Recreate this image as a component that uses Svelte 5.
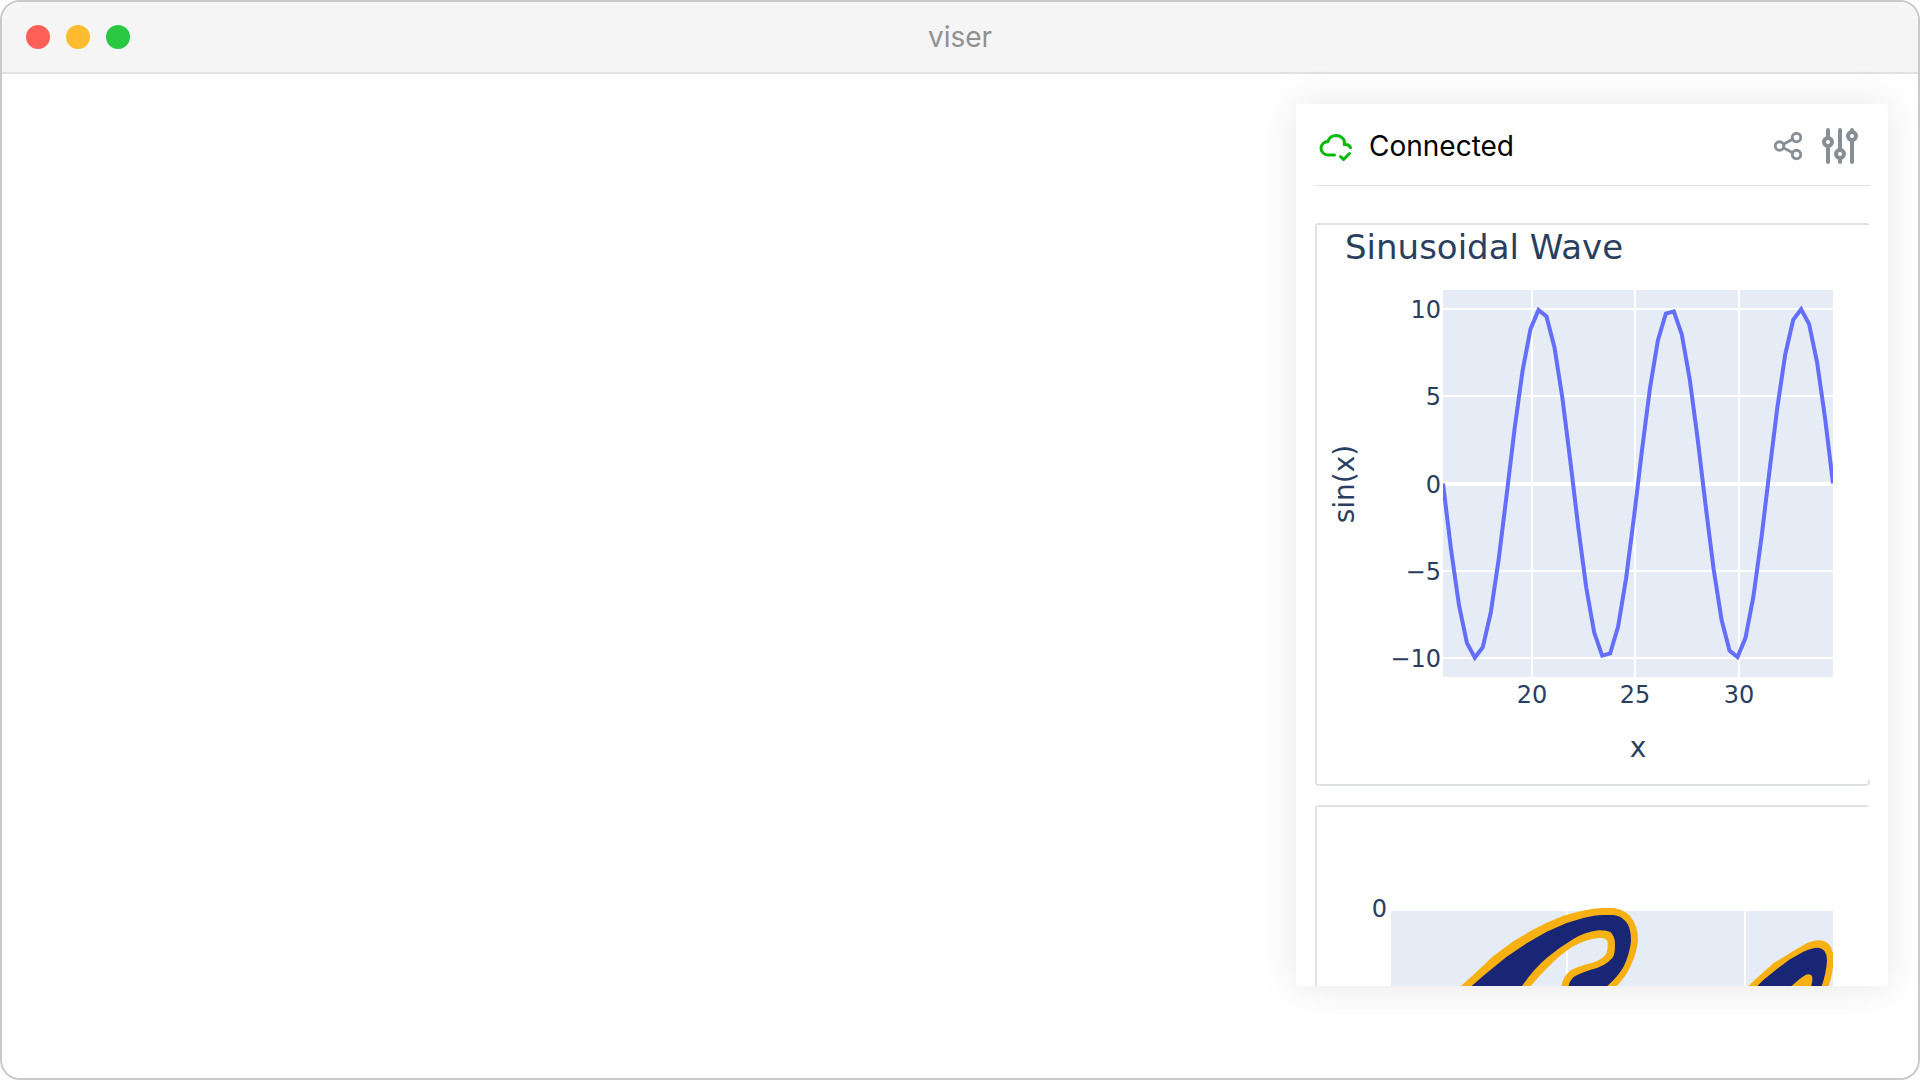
<script>
  const plot = { left: 126, top: 65, width: 390, height: 387 };
  const start = 5 * Math.PI;
  const end = 11 * Math.PI;
  const samples = 50;
  const yMax = 11.1;

  const px = (v) => plot.left + ((v - start) / (end - start)) * plot.width;
  const py = (v) => plot.top + plot.height / 2 - (v / yMax) * (plot.height / 2);

  const wave = Array.from({ length: samples }, (_, i) => {
    const x = start + ((end - start) * i) / (samples - 1);
    return `${px(x).toFixed(2)},${py(10 * Math.sin(x)).toFixed(2)}`;
  }).join(' ');

  const xTicks = [20, 25, 30].map((v) => ({ v, at: Math.round(px(v)) }));
  const yTicks = [10, 5, 0, -5, -10].map((v) => ({
    label: String(v).replace('-', '−'),
    zero: v === 0,
    at: Math.round(py(v)),
  }));
</script>

<div class="window">
  <header class="titlebar">
    <div class="lights">
      <button class="light close" aria-label="Close"></button>
      <button class="light minimize" aria-label="Minimize"></button>
      <button class="light zoom" aria-label="Zoom"></button>
    </div>
    <h1>viser</h1>
  </header>

  <main>
    <aside class="panel">
      <div class="status">
        <svg class="cloud" viewBox="0 0 24 24" aria-hidden="true">
          <path d="M11 18.004h-4.343c-2.572 -.004 -4.657 -2.011 -4.657 -4.487c0 -2.475 2.085 -4.482 4.657 -4.482c.393 -1.762 1.794 -3.2 3.675 -3.773c1.88 -.572 3.956 -.193 5.444 1c1.488 1.19 2.162 3.007 1.77 4.769h.99c1.388 0 2.585 .82 3.138 2.007" />
          <path d="M15 19l2 2l4 -4" />
        </svg>
        <span class="label">Connected</span>
        <button class="icon share" aria-label="Share">
          <svg viewBox="0 0 24 24" aria-hidden="true">
            <circle cx="6" cy="12" r="3" />
            <circle cx="18" cy="6" r="3" />
            <circle cx="18" cy="18" r="3" />
            <path d="M8.7 10.7l6.6 -3.4M8.7 13.3l6.6 3.4" />
          </svg>
        </button>
        <button class="icon settings" aria-label="Configuration">
          <svg viewBox="0 0 24 24" aria-hidden="true">
            <circle cx="6" cy="10" r="2" />
            <circle cx="12" cy="16" r="2" />
            <circle cx="18" cy="7" r="2" />
            <path d="M6 4v4M6 12v8M12 4v10M12 18v2M18 4v1M18 9v11" />
          </svg>
        </button>
      </div>

      <div class="cards">
        <section class="card">
          <svg class="chart" width="553" height="555" viewBox="0 0 553 555" role="img" aria-label="Sinusoidal Wave">
            <defs>
              <clipPath id="wave-clip">
                <rect x={plot.left} y={plot.top} width={plot.width} height={plot.height} />
              </clipPath>
            </defs>
            <rect class="paper" width="553" height="555" />
            <text class="title" x="28" y="34">Sinusoidal Wave</text>
            <rect class="plot" x={plot.left} y={plot.top} width={plot.width} height={plot.height} />
            {#each xTicks as t}
              <path class="grid" d="M{t.at} {plot.top}v{plot.height}" />
              <text class="tick middle" x={t.at} y="478">{t.v}</text>
            {/each}
            {#each yTicks as t}
              <path class="grid" class:zero={t.zero} d="M{plot.left} {t.at}h{plot.width}" />
              <text class="tick end" x="124" y={t.at + 9}>{t.label}</text>
            {/each}
            <polyline class="wave" points={wave} clip-path="url(#wave-clip)" />
            <text class="axis middle" x="321" y="532">x</text>
            <text class="axis middle" transform="translate(37 259) rotate(-90)">sin(x)</text>
          </svg>
        </section>

        <section class="card">
          <svg class="chart" width="553" height="555" viewBox="0 0 553 555" role="img" aria-label="Image plot">
            <defs>
              <clipPath id="image-clip">
                <rect x="74" y="98" width="442" height="400" />
              </clipPath>
            </defs>
            <rect class="paper" width="553" height="555" />
            <rect class="plot" x="74" y="104" width="442" height="394" />
            <path class="grid" d="M250 104v394M428 104v394" />
            <text class="tick end" x="70" y="110">0</text>
            <g clip-path="url(#image-clip)">
              <g transform="translate(-37 73) scale(.33333)">
                <path
                  class="gold"
                  d="M520 340L543 318L582 283L640 228L700 184L750 154L800 128L850 107L900 94Q940 84 975 84H1000Q1030 87 1050 108Q1074 135 1074 180Q1072 215 1052 258Q1036 293 1010 318L990 340H845V318Q846 294 870 272Q890 260 935 249Q965 240 978 222Q984 212 983 185Q978 173 960 173Q920 176 880 199Q845 220 810 256Q780 285 752 318L735 340Z"
                />
                <path
                  class="navy"
                  d="M550 340L575 318L612 286L680 230L740 190L800 155L860 129L910 114Q945 105 970 105H1000Q1022 107 1036 123Q1054 140 1053 185Q1048 225 1030 262Q1012 292 982 318L960 340H866V318Q866 308 880 292Q892 283 930 270Q975 260 997 234Q1005 225 1005 195Q1006 170 992 157Q980 150 955 151Q915 156 880 177Q840 201 800 234Q762 266 726 318L710 340Z"
                />
                <path
                  class="gold"
                  d="M1380 340L1405 318L1438 287L1480 250L1540 213L1580 190Q1605 179 1622 181Q1652 184 1659 220V260Q1657 285 1646 318L1640 340Z"
                />
                <path
                  class="navy"
                  d="M1410 340L1432 318L1450 300L1490 268L1530 238L1570 215Q1600 202 1615 203Q1641 206 1641 240Q1639 280 1625 318L1618 340H1590L1594 318Q1599 300 1596 288Q1590 280 1578 284Q1560 294 1535 318L1515 340Z"
                />
              </g>
            </g>
          </svg>
        </section>
      </div>
    </aside>
  </main>
</div>

<style>
  :global(body) {
    background: #fff;
  }

  .window {
    box-sizing: border-box;
    height: 100vh;
    display: flex;
    flex-direction: column;
    overflow: hidden;
    border: 2px solid #cacaca;
    border-radius: 20px;
    background: #fff;
    font-family: Inter, 'Liberation Sans', sans-serif;
  }

  .titlebar {
    flex: none;
    display: grid;
    grid-template-columns: 1fr auto 1fr;
    align-items: center;
    height: 70px;
    padding: 0 24px;
    border-bottom: 2px solid #e1e1e1;
    background: #f5f5f5;
  }

  .lights {
    display: flex;
    gap: 16px;
  }

  .light {
    width: 24px;
    height: 24px;
    padding: 0;
    border: 0;
    border-radius: 50%;
  }

  .close {
    background: #ff5f57;
  }

  .minimize {
    background: #febc2e;
  }

  .zoom {
    background: #28c840;
  }

  h1 {
    margin: 0;
    color: #919191;
    font-size: 28px;
    font-weight: 400;
    line-height: 36px;
  }

  main {
    flex: 1;
    min-height: 0;
    display: flex;
    justify-content: flex-end;
    padding: 30px 30px 92px;
  }

  .panel {
    box-sizing: border-box;
    width: 592px;
    display: flex;
    flex-direction: column;
    overflow: hidden;
    padding: 0 18px 0 19px;
    border-radius: 4px;
    background: #fff;
    box-shadow: 0 0 40px rgba(0, 0, 0, 0.1);
  }

  .status {
    box-sizing: border-box;
    flex: none;
    display: flex;
    align-items: center;
    height: 82px;
    padding: 2px 6px 0 3px;
    border-bottom: 1px solid #dee2e6;
  }

  svg {
    display: block;
  }

  .status svg {
    fill: none;
    stroke: currentColor;
    stroke-width: 2;
    stroke-linecap: round;
    stroke-linejoin: round;
  }

  .cloud {
    width: 36px;
    height: 36px;
    color: #00bb00;
  }

  .label {
    flex: 1;
    padding-left: 15px;
    color: #000;
    font-size: 28px;
    line-height: 36px;
  }

  .icon {
    padding: 0;
    border: 0;
    background: none;
    color: #868e96;
  }

  .share svg {
    width: 34px;
    height: 34px;
  }

  .settings {
    margin-left: 11px;
  }

  .settings svg {
    width: 48px;
    height: 48px;
  }

  .cards {
    flex: 1;
    min-height: 0;
    display: flex;
    flex-direction: column;
    gap: 19px;
    padding-top: 37px;
  }

  .card {
    flex: none;
    padding-bottom: 4px;
    border: 2px solid #dee2e6;
    border-radius: 4px;
  }

  .chart {
    font-family: Verdana, 'DejaVu Sans', sans-serif;
  }

  .chart text {
    fill: #2a3f5f;
  }

  .paper {
    fill: #fff;
  }

  .plot {
    fill: #e5ecf6;
  }

  .grid {
    stroke: #fff;
    stroke-width: 2;
  }

  .zero {
    stroke-width: 4;
  }

  .wave {
    fill: none;
    stroke: #636efa;
    stroke-width: 4;
    stroke-miterlimit: 2;
  }

  .title {
    font-size: 34px;
  }

  .tick {
    font-size: 24px;
  }

  .axis {
    font-size: 28px;
  }

  .middle {
    text-anchor: middle;
  }

  .end {
    text-anchor: end;
  }

  .gold {
    fill: #f7b113;
  }

  .navy {
    fill: #192675;
  }
</style>
